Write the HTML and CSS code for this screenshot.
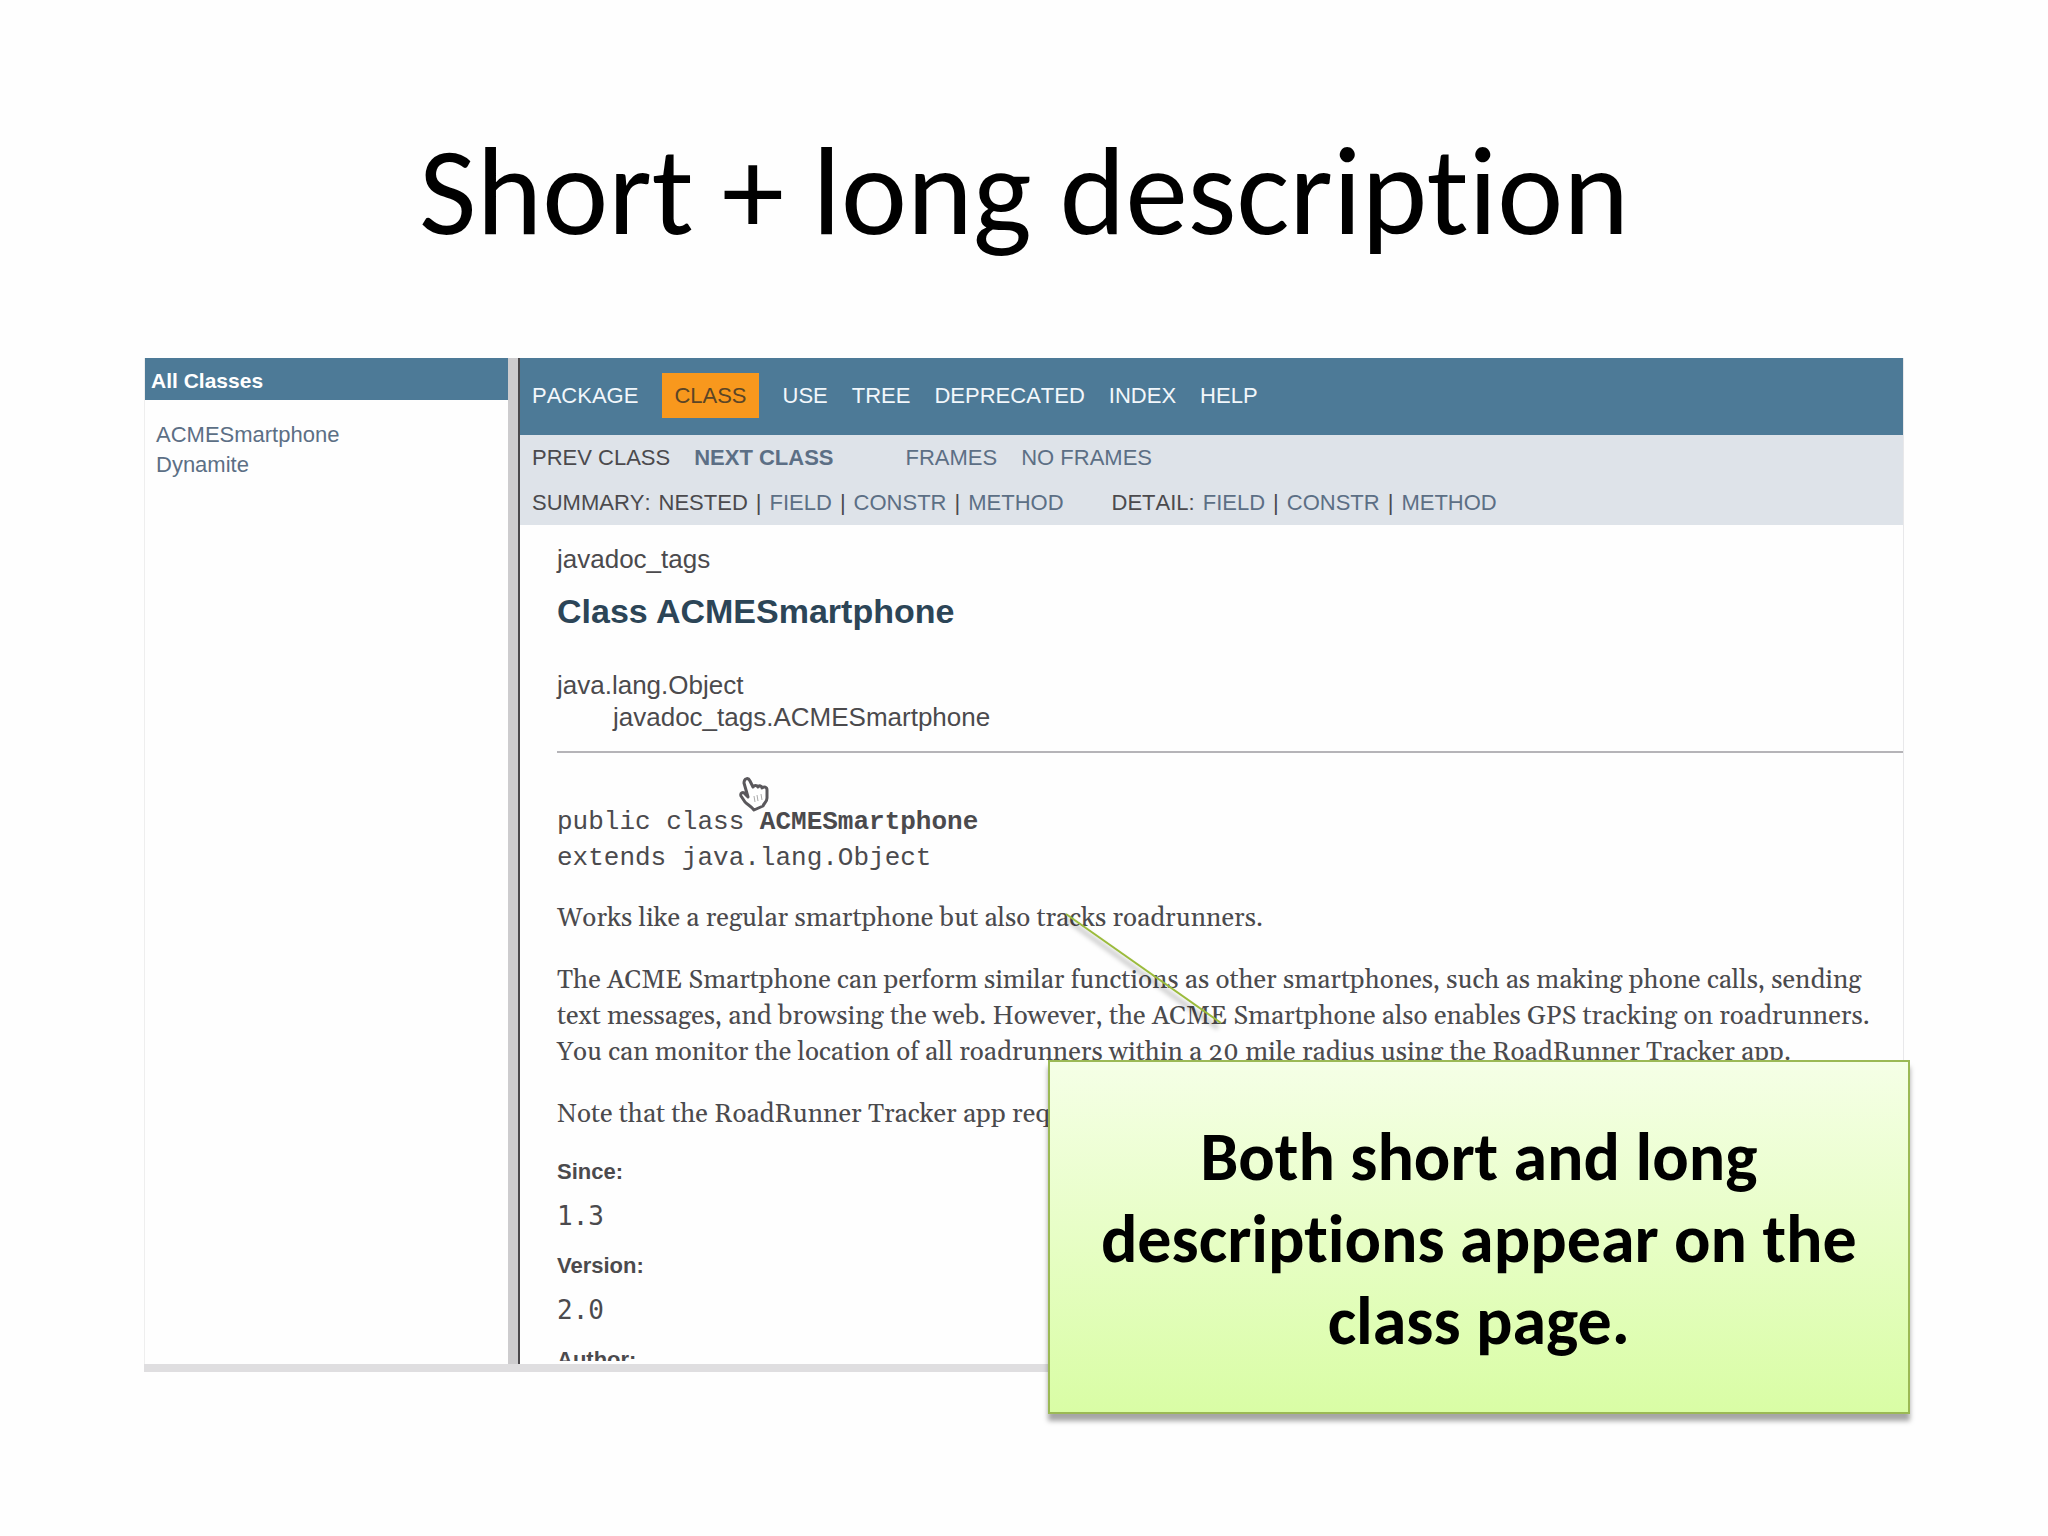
FILE: index.html
```html
<!DOCTYPE html>
<html lang="en">
<head>
<meta charset="utf-8">
<title>Short + long description</title>
<link rel="stylesheet" href="styles.css">
</head>
<body>
<main class="slide">
  <h1 class="slide-title">Short + long description</h1>
  <div class="viewer">
    <aside class="classes">
      <h2 class="classes-title">All Classes</h2>
      <ul class="classes-list">
        <li><a href="#acme">ACMESmartphone</a></li>
        <li><a href="#dynamite">Dynamite</a></li>
      </ul>
    </aside>
    <section class="doc">
      <nav class="topnav">
        <a href="#package">PACKAGE</a>
        <a class="current" href="#class">CLASS</a>
        <a href="#use">USE</a>
        <a href="#tree">TREE</a>
        <a href="#deprecated">DEPRECATED</a>
        <a href="#index">INDEX</a>
        <a href="#help">HELP</a>
      </nav>
      <div class="subnav">
        <div class="subnav-row">
          <span>PREV CLASS</span>
          <a class="next" href="#next">NEXT CLASS</a>
          <a class="group" href="#frames">FRAMES</a>
          <a href="#noframes">NO FRAMES</a>
        </div>
        <div class="subnav-row links">
          <span>SUMMARY:</span> <span>NESTED</span> <span>|</span> <a href="#field">FIELD</a> <span>|</span> <a href="#constr">CONSTR</a> <span>|</span> <a href="#method">METHOD</a>
          <span class="detail">DETAIL:</span> <a href="#dfield">FIELD</a> <span>|</span> <a href="#dconstr">CONSTR</a> <span>|</span> <a href="#dmethod">METHOD</a>
        </div>
      </div>
      <article class="content" id="acme">
        <p class="package">javadoc_tags</p>
        <h2 class="class-name">Class ACMESmartphone</h2>
        <ul class="inheritance">
          <li>java.lang.Object</li>
          <li class="child">javadoc_tags.ACMESmartphone</li>
        </ul>
        <hr class="rule">
        <pre class="signature">public class <strong>ACMESmartphone</strong>
extends java.lang.Object</pre>
        <div class="description">
          <p>Works like a regular smartphone but also tracks roadrunners.</p>
          <p>The ACME Smartphone can perform similar functions as other smartphones, such as making phone calls, sending<br>text messages, and browsing the web. However, the ACME Smartphone also enables GPS tracking on roadrunners.<br>You can monitor the location of all roadrunners within a 20 mile radius using the RoadRunner Tracker app.</p>
          <p>Note that the RoadRunner Tracker app req</p>
        </div>
        <dl class="tags">
          <dt>Since:</dt><dd>1.3</dd>
          <dt>Version:</dt><dd>2.0</dd>
          <dt>Author:</dt>
        </dl>
      </article>
    </section>
    <svg class="pointer" width="32" height="36" viewBox="0 0 32 36" aria-hidden="true">
      <path d="M8 3c2-1 3 0 4 2l3 6c1-2 4-2 5 0 1-2 4-1 4 1 2-2 5-1 5 2l0 8c0 4-3 5-4 8l-9 4c-3-4-6-5-9-8l-4-6c-1-3 2-5 4-2l3 3-4-14c0-2 1-4 2-4z" fill="#fff" stroke="#5a585c" stroke-width="3" stroke-linejoin="round"/>
      <path d="M16 20l1 6M19 19l1 6M23 18l1 6" stroke="#aaa" stroke-width="1" fill="none"/>
    </svg>
    <svg class="leader" width="170" height="124" viewBox="0 0 170 124" aria-hidden="true">
      <path class="leader-shadow" d="M6 10L158 119"/>
      <path class="leader-line" d="M6 5L161 114"/>
    </svg>
    <p class="callout">Both short and long descriptions appear on the class page.</p>
  </div>
</main>
</body>
</html>
```
FILE: styles.css
```css
* { box-sizing: border-box; }

body {
  margin: 0;
  background: #fefefe;
  color: #4b4a4d;
  font-family: "Liberation Sans", Arial, sans-serif;
  font-size: 22px;
}

h1, h2, p, ul, dl, dd, pre { margin: 0; padding: 0; }
ul { list-style: none; }
a { color: #5c6f85; text-decoration: none; }

.slide { padding: 120px 144px; }

.slide-title {
  color: #000;
  font: 400 125px/144px Carlito, Calibri, Lato, sans-serif;
  font-variant-ligatures: none;
  text-align: center;
  margin-bottom: 94px;
}

.viewer {
  position: relative;
  display: grid;
  grid-template-columns: 376px 1fr;
  aspect-ratio: 1760 / 1014;
  border-bottom: 8px solid #dfdee0;
}

.classes {
  border-right: 2px solid #4a484b;
  border-left: 1px solid #eee;
  box-shadow: inset -10px 0 #cdccce;
  padding-right: 10px;
}

.classes-title {
  background: #4d7a97;
  color: #fff;
  font-size: 21px;
  line-height: 42px;
  padding: 2px 6px 0;
  height: 42px;
}

.classes-list { padding: 20px 11px; line-height: 30px; }

.doc {
  min-width: 0;
  height: 100%;
  max-height: 1003px;
  overflow: hidden;
  border-right: 1px solid #e8e8ea;
}

.topnav {
  display: flex;
  align-items: center;
  gap: 24px;
  padding: 15px 12px 17px;
  background: #4d7a97;
  line-height: 45px;
  font-kerning: none;
}
.topnav a { color: #f2f7fb; }
.topnav .current { background: #f8981d; color: #5b4526; padding: 0 12px; }

.subnav { background: #dee3e9; padding: 0 12px; font-kerning: none; }
.subnav-row { display: flex; gap: 24px; line-height: 45px; }
.subnav-row.links { gap: 8px; }
.subnav .next { font-weight: 700; }
.subnav .group { margin-left: 48px; }
.subnav .detail { margin-left: 40px; }

.content { padding: 18px 0 0 37px; }
.package { font-size: 26px; line-height: 32px; }
.class-name { font-size: 34px; line-height: 40px; margin-top: 16px; color: #2c4557; }
.inheritance { font-size: 26px; line-height: 32px; margin-top: 38px; font-kerning: none; }
.inheritance .child { padding-left: 56px; }
.rule { border: 0; border-top: 2px solid #b5b4b8; margin: 18px 0 51px; }

.signature {
  font: 26px/36px "Liberation Mono", "Courier New", monospace;
  margin-bottom: 25px;
}

.description {
  display: grid;
  gap: 26px;
  margin-bottom: 24px;
  font: 26px/36px Georgia, Gelasio, "Liberation Serif", serif;
  font-variant-numeric: oldstyle-nums;
  white-space: nowrap;
}

.tags dt { font-weight: 700; line-height: 30px; }
.tags dd { font: 26px/34px "DejaVu Sans Mono", monospace; margin: 12px 0 18px; }

.pointer { position: absolute; left: 594px; top: 418px; }
.leader { position: absolute; left: 916px; top: 551px; }
.leader-line { stroke: #9bbb3c; stroke-width: 2; }
.leader-shadow { stroke: #000; stroke-opacity: .18; stroke-width: 5; filter: blur(2px); }

.callout {
  position: absolute;
  right: -6px;
  bottom: -50px;
  width: 49%;
  padding: 54px 40px 50px;
  border: 2px solid #9bb955;
  background: linear-gradient(#f5ffe6, #d9fda5);
  box-shadow: 0 7px 5px rgba(0, 0, 0, .35);
  color: #000;
  font: 700 68px/82px Carlito, Calibri, Lato, sans-serif;
  font-variant-ligatures: none;
  text-align: center;
}
```
